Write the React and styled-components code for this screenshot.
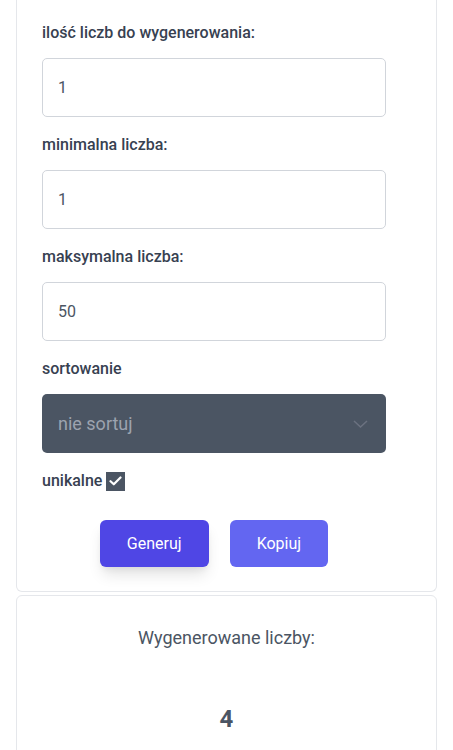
import React from 'react';
import styled, { createGlobalStyle } from 'styled-components';

const GlobalStyle = createGlobalStyle`
  body {
    margin: 0;
    background: #fff;
    font-family: Roboto, "Liberation Sans", sans-serif;
  }
`;

const Page = styled.div`
  display: flex;
  flex-direction: column;
  gap: 3px;
  padding: 0 16px;
`;

const Card = styled.section`
  border: 1px solid #e5e7eb;
  border-top-width: ${(p) => (p.$cut ? 0 : 1)}px;
  border-radius: ${(p) => (p.$cut ? '0 0 6px 6px' : '6px 6px 0 0')};
  background: #fff;
`;

const Form = styled.form`
  width: 344px;
  padding: 21px 0 24px 25px;
  display: flex;
  flex-direction: column;
`;

const Label = styled.label`
  display: block;
  font-size: 16px;
  line-height: 24px;
  font-weight: 500;
  color: #374151;
  margin-bottom: 13px;
`;

const Field = styled.div`
  margin-bottom: 16px;
`;

const Input = styled.input`
  box-sizing: border-box;
  width: 100%;
  height: 59px;
  padding: 0 15px;
  border: 1px solid #d1d5db;
  border-radius: 5px;
  font-family: inherit;
  font-size: 16px;
  color: #4b5563;
  background: #fff;
  outline: none;
`;

const SelectBox = styled.div`
  height: 59px;
  border-radius: 5px;
  background: #4b5563;
  display: flex;
  align-items: center;
  justify-content: space-between;
  padding: 0 18px 0 16px;
  color: #9ca3af;
  font-size: 18px;
`;

const CheckRow = styled.div`
  display: flex;
  align-items: center;
  gap: 4px;
  font-size: 16px;
  line-height: 24px;
  font-weight: 500;
  color: #374151;
`;

const CheckBox = styled.span`
  width: 19px;
  height: 19px;
  background: #4b5563;
  display: flex;
  align-items: center;
  justify-content: center;
`;

const Buttons = styled.div`
  display: flex;
  justify-content: center;
  gap: 21px;
  margin-top: 27px;
`;

const Button = styled.button`
  border: none;
  border-radius: 6px;
  padding: 11px 27px;
  font-family: inherit;
  font-size: 16px;
  line-height: 25px;
  color: #fff;
  background: ${(p) => (p.$primary ? '#4f46e5' : '#6366f1')};
  box-shadow: ${(p) => (p.$primary ? '0 10px 15px -3px rgba(0,0,0,0.12), 0 4px 6px -2px rgba(0,0,0,0.06)' : 'none')};
`;

const Result = styled.div`
  display: flex;
  flex-direction: column;
  align-items: center;
  padding-top: 28px;
  height: 160px;
`;

const ResultTitle = styled.div`
  font-size: 18px;
  line-height: 28px;
  color: #4b5563;
`;

const ResultNumber = styled.div`
  margin-top: 51px;
  font-size: 24px;
  line-height: 32px;
  font-weight: 700;
  color: #4b5563;
`;

const fields = [
  { label: 'ilość liczb do wygenerowania:', value: '1' },
  { label: 'minimalna liczba:', value: '1' },
  { label: 'maksymalna liczba:', value: '50' },
];

const App = () => (
  <>
    <GlobalStyle />
    <Page>
      <Card $cut>
        <Form onSubmit={(e) => e.preventDefault()}>
          {fields.map((f) => (
            <Field key={f.label}>
              <Label>{f.label}</Label>
              <Input type="number" defaultValue={f.value} />
            </Field>
          ))}
          <Field>
            <Label>sortowanie</Label>
            <SelectBox>
              nie sortuj
              <svg width="15" height="8" viewBox="0 0 15 8" fill="none">
                <path d="M1 1l6.5 6L14 1" stroke="#6b7280" strokeWidth="1.5" />
              </svg>
            </SelectBox>
          </Field>
          <CheckRow>
            unikalne
            <CheckBox>
              <svg width="13" height="10" viewBox="0 0 13 10" fill="none">
                <path d="M1.5 5.2l3.3 3.1L11.5 1.5" stroke="#fff" strokeWidth="2.2" strokeLinecap="round" strokeLinejoin="round" />
              </svg>
            </CheckBox>
          </CheckRow>
          <Buttons>
            <Button type="button" $primary>Generuj</Button>
            <Button type="button">Kopiuj</Button>
          </Buttons>
        </Form>
      </Card>
      <Card>
        <Result>
          <ResultTitle>Wygenerowane liczby:</ResultTitle>
          <ResultNumber>4</ResultNumber>
        </Result>
      </Card>
    </Page>
  </>
);

export default App;
